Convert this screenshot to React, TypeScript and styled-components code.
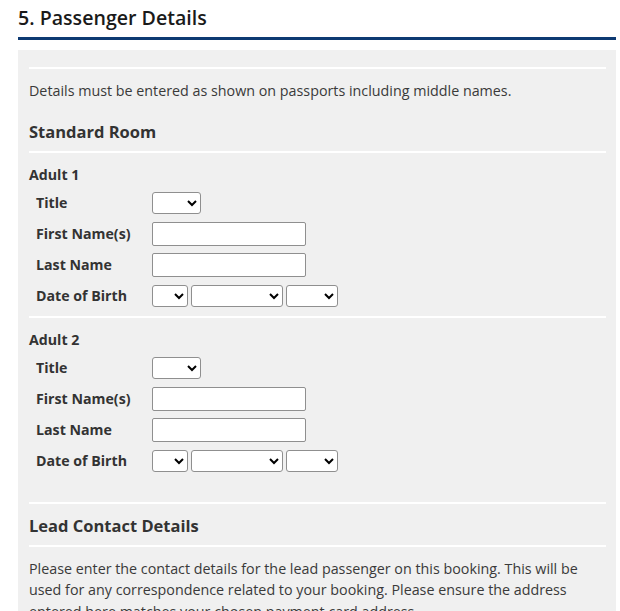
import React from 'react';
import styled, { createGlobalStyle } from 'styled-components';

const GlobalStyle = createGlobalStyle`
  body {
    margin: 0;
    background: #ffffff;
    color: #333333;
    font-family: 'Open Sans', 'Noto Sans', sans-serif;
  }
`;

const Page = styled.div`
  padding: 4px 4px 0 18px;
`;

const PageTitle = styled.h2`
  margin: 0;
  font-size: 19.6px;
  line-height: 28px;
  font-weight: 600;
  color: #1a1a1a;
  padding-bottom: 5px;
  border-bottom: 3px solid #0d3a72;
`;

const Panel = styled.div`
  margin-top: 10px;
  background: #f0f0f0;
  padding: 17px 10px 0 11px;
`;

const Section = styled.div<{ $top?: number; $bottom?: number }>`
  border-top: 2px solid #ffffff;
  padding-top: ${(p) => p.$top ?? 0}px;
  padding-bottom: ${(p) => p.$bottom ?? 0}px;
`;

const Intro = styled.p`
  margin: 0;
  font-size: 14.3px;
  line-height: 22px;
  color: #3a3a3a;
`;

const SectionHeading = styled.h3<{ $gap?: number }>`
  margin: ${(p) => p.$gap ?? 0}px 0 7px;
  font-size: 16.5px;
  line-height: 24px;
  font-weight: 700;
  color: #333333;
`;

const AdultHeading = styled.h4`
  margin: 0 0 2px;
  font-size: 14.2px;
  line-height: 20px;
  font-weight: 700;
`;

const Row = styled.div`
  display: grid;
  grid-template-columns: 116px 1fr;
  align-items: center;
  height: 31px;
  padding-left: 7px;
`;

const Label = styled.label`
  font-size: 14.2px;
  font-weight: 700;
  color: #333333;
`;

const Controls = styled.div`
  display: flex;
  gap: 3px;
  align-items: center;
`;

const Select = styled.select<{ $w: number }>`
  width: ${(p) => p.$w}px;
  height: 22px;
  background: #ffffff;
  border: 1px solid #8f8f8f;
  border-radius: 3px;
  font-family: inherit;
  font-size: 13px;
  padding: 0 2px;
`;

const TextInput = styled.input`
  box-sizing: border-box;
  width: 154px;
  height: 24px;
  background: #ffffff;
  border: 1px solid #8f8f8f;
  border-radius: 2px;
  font-family: inherit;
  font-size: 14px;
`;

const Body = styled.p`
  margin: 0;
  font-size: 14.3px;
  line-height: 21.5px;
  color: #3a3a3a;
`;

function Adult({ n }: { n: number }) {
  return (
    <Section $top={12} $bottom={n === 1 ? 5 : 26}>
      <AdultHeading>Adult {n}</AdultHeading>
      <Row>
        <Label>Title</Label>
        <Controls>
          <Select $w={49}>
            <option></option>
          </Select>
        </Controls>
      </Row>
      <Row>
        <Label>First Name(s)</Label>
        <Controls>
          <TextInput type="text" />
        </Controls>
      </Row>
      <Row>
        <Label>Last Name</Label>
        <Controls>
          <TextInput type="text" />
        </Controls>
      </Row>
      <Row>
        <Label>Date of Birth</Label>
        <Controls>
          <Select $w={36}>
            <option></option>
          </Select>
          <Select $w={92}>
            <option></option>
          </Select>
          <Select $w={52}>
            <option></option>
          </Select>
        </Controls>
      </Row>
    </Section>
  );
}

export default function App() {
  return (
    <Page>
      <GlobalStyle />
      <PageTitle>5. Passenger Details</PageTitle>
      <Panel>
        <Section $top={11}>
          <Intro>Details must be entered as shown on passports including middle names.</Intro>
          <SectionHeading $gap={18}>Standard Room</SectionHeading>
        </Section>
        <Adult n={1} />
        <Adult n={2} />
        <Section $top={10}>
          <SectionHeading>Lead Contact Details</SectionHeading>
        </Section>
        <Section $top={10.5}>
          <Body>
            Please enter the contact details for the lead passenger on this booking. This will be
            used for any correspondence related to your booking. Please ensure the address
            entered here matches your chosen payment card address.
          </Body>
        </Section>
      </Panel>
    </Page>
  );
}
